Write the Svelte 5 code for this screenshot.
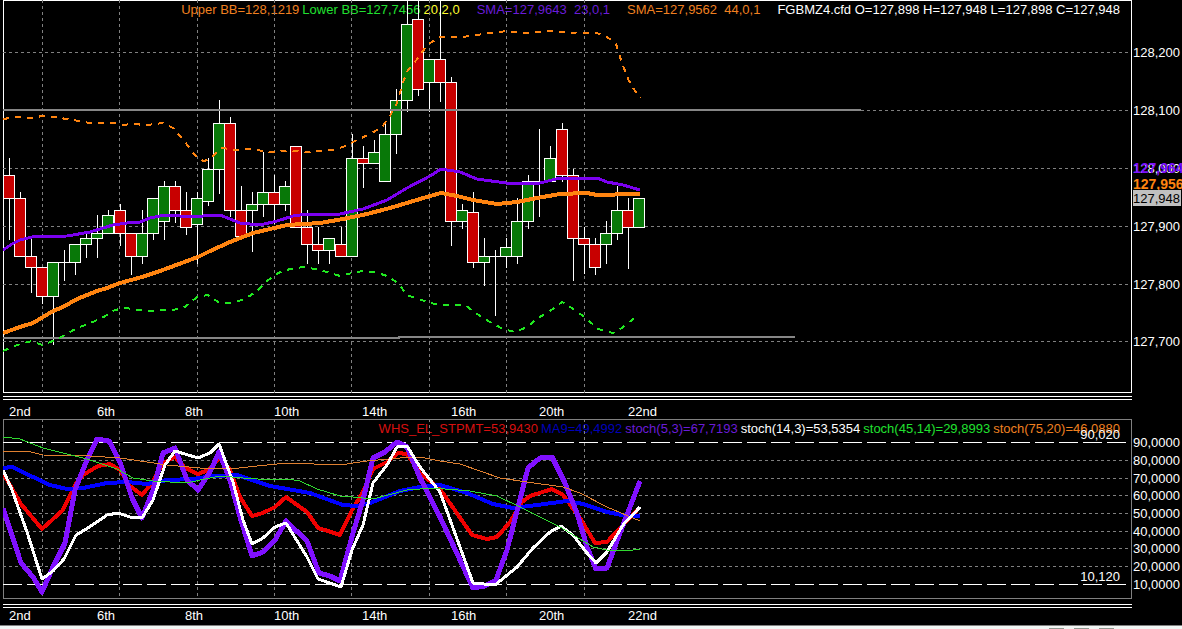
<script>
	const DAY_LINES = [42, 119, 197, 274, 351, 429, 506, 584];

	const dates = [
		{ x: 9, label: '2nd' },
		{ x: 97, label: '6th' },
		{ x: 185, label: '8th' },
		{ x: 274, label: '10th' },
		{ x: 362, label: '14th' },
		{ x: 451, label: '16th' },
		{ x: 539, label: '20th' },
		{ x: 628, label: '22nd' }
	];

	const prices = [
		{ y: 52, label: '128,200' },
		{ y: 110, label: '128,100' },
		{ y: 168, label: '128,000' },
		{ y: 226, label: '127,900' },
		{ y: 284, label: '127,800' },
		{ y: 341, label: '127,700' }
	];

	const levels = [
		{ y: 442, label: '90,0000' },
		{ y: 460, label: '80,0000' },
		{ y: 478, label: '70,0000' },
		{ y: 495, label: '60,0000' },
		{ y: 513, label: '50,0000' },
		{ y: 531, label: '40,0000' },
		{ y: 548, label: '30,0000' },
		{ y: 566, label: '20,0000' },
		{ y: 584, label: '10,0000' }
	];

	// high, body top, body bottom, low, direction
	const bars = [
		[158, 175, 198, 239, 'down'],
		[192, 198, 256, 256, 'down'],
		[239, 256, 267, 292, 'down'],
		[267, 267, 296, 303, 'down'],
		[262, 262, 296, 344, 'up'],
		[250, 262, 262, 280, 'up'],
		[244, 244, 262, 274, 'up'],
		[233, 238, 244, 257, 'up'],
		[215, 233, 238, 257, 'up'],
		[210, 215, 233, 233, 'up'],
		[204, 210, 233, 245, 'down'],
		[233, 233, 256, 274, 'down'],
		[210, 233, 256, 263, 'up'],
		[198, 198, 233, 239, 'up'],
		[181, 186, 221, 239, 'up'],
		[181, 186, 210, 222, 'down'],
		[192, 210, 227, 234, 'down'],
		[192, 198, 224, 263, 'up'],
		[158, 169, 201, 205, 'up'],
		[100, 123, 169, 193, 'up'],
		[117, 123, 210, 216, 'down'],
		[186, 210, 236, 236, 'down'],
		[192, 204, 210, 251, 'up'],
		[152, 192, 204, 216, 'up'],
		[175, 192, 204, 223, 'down'],
		[181, 186, 204, 210, 'up'],
		[146, 146, 227, 227, 'down'],
		[210, 227, 244, 263, 'down'],
		[227, 244, 250, 263, 'down'],
		[238, 238, 250, 263, 'up'],
		[227, 244, 256, 256, 'down'],
		[134, 158, 256, 256, 'up'],
		[146, 158, 163, 187, 'down'],
		[140, 152, 163, 163, 'up'],
		[123, 134, 181, 181, 'up'],
		[89, 100, 134, 153, 'up'],
		[0, 24, 100, 111, 'up'],
		[0, 19, 89, 95, 'down'],
		[59, 59, 82, 111, 'up'],
		[0, 59, 82, 101, 'down'],
		[77, 82, 221, 245, 'down'],
		[204, 210, 221, 228, 'up'],
		[192, 212, 262, 267, 'down'],
		[238, 256, 262, 285, 'up'],
		[250, 256, 256, 315, 'up'],
		[238, 247, 256, 267, 'up'],
		[198, 221, 256, 263, 'up'],
		[175, 181, 221, 228, 'up'],
		[129, 181, 181, 216, 'up'],
		[146, 158, 181, 181, 'up'],
		[123, 129, 175, 181, 'down'],
		[169, 175, 238, 280, 'down'],
		[227, 238, 244, 273, 'down'],
		[238, 244, 267, 274, 'down'],
		[221, 233, 244, 263, 'up'],
		[186, 210, 233, 239, 'up'],
		[198, 210, 227, 268, 'down'],
		[198, 198, 227, 227, 'up']
	];

	const BAR_STEP = 11.05;
	const barX = (i) => Math.round(9 + BAR_STEP * i) + 0.5;

	const upperBB =
		'3,119 17,117 32,118 42,116 53,117 67,119 90,123 115,123 123,125 132,124 147,125 163,123 173,128 185,142 193,153 200,160 205,161 213,156 222,148 237,150 250,149 270,152 290,151 307,152 332,150 343,147 353,142 370,134 382,127 390,116 397,103 403,82 408,70 419,57 427,45 440,37 463,37 490,33 507,31 522,33 553,31 577,33 597,33 607,37 616,44 621,60 628,79 633,88 640,98';
	const lowerBB =
		'3,351 17,345 32,341 42,345 53,341 65,335 77,328 88,324 102,318 115,310 125,308 147,311 173,310 185,307 197,297 208,295 218,302 232,303 245,299 257,291 267,281 278,273 290,269 303,267 315,269 327,272 340,276 352,273 363,271 375,272 387,276 398,283 407,295 430,303 443,305 465,305 477,314 490,322 503,329 515,332 527,327 538,318 550,311 562,302 575,310 587,319 598,329 613,333 622,328 633,319 638,317';
	const smaFast =
		'3,250 12,244 20,240 32,237 67,236 90,232 113,225 127,223 140,222 150,218 160,216 173,215 187,217 220,215 240,223 260,225 277,221 293,216 307,214 340,214 363,209 387,200 407,188 430,176 441,169 460,172 477,179 513,184 540,183 560,178 597,178 607,182 623,185 640,190';
	const smaSlow =
		'3,333 23,326 33,323 53,311 63,307 77,299 97,291 107,288 120,283 142,277 160,271 187,261 198,257 210,251 230,242 253,233 287,225 320,223 343,219 367,214 390,208 410,202 430,196 441,193 457,196 473,200 497,204 517,202 537,198 560,194 587,193 597,195 610,195 620,194 640,194';

	const oscillators = [
		{
			name: 'stpmt',
			points:
				'3,473 21,504 42,529 63,510 75,485 83,475 98,466 110,464 120,470 130,486 142,495 152,483 163,463 175,457 185,468 198,474 208,470 220,458 230,470 240,497 252,516 263,513 275,507 286,497 307,512 318,528 328,531 340,535 352,510 363,492 373,469 387,462 398,453 407,454 420,473 440,489 472,535 487,539 497,537 510,522 522,502 530,496 552,489 563,495 580,518 595,543 607,542 625,523 640,507'
		},
		{
			name: 'ma9',
			points:
				'3,468 12,467 33,477 50,485 67,489 83,488 107,483 127,482 147,484 167,480 193,479 213,476 237,475 270,486 310,493 343,505 357,506 370,503 400,491 420,487 440,485 467,493 493,504 513,508 537,505 567,501 583,504 607,512 627,516 640,516'
		},
		{
			name: 'stoch5',
			points:
				'3,508 21,563 33,577 42,592 53,567 65,543 75,490 87,460 97,439 109,441 120,462 132,498 142,518 153,490 163,453 175,448 187,480 198,490 210,472 219,452 230,480 240,517 252,556 263,552 275,540 286,521 307,541 319,573 330,576 340,581 353,533 363,500 373,458 385,452 397,442 407,447 420,478 440,517 473,588 485,586 496,580 507,550 518,507 528,468 540,458 552,457 565,483 577,513 587,547 596,569 607,568 620,533 640,481'
		},
		{
			name: 'stoch75',
			points:
				'3,451 27,451 43,455 90,456 120,458 147,462 167,465 200,468 230,469 257,466 287,463 340,465 367,461 400,458 420,457 440,461 460,464 500,478 527,482 563,487 580,493 607,507 640,521'
		},
		{
			name: 'stoch14',
			points:
				'3,470 12,490 27,532 42,579 53,571 64,559 76,535 88,528 107,515 118,513 130,517 142,518 153,500 165,465 175,451 198,458 210,453 219,444 233,482 243,520 252,544 263,538 275,527 286,523 307,557 318,579 341,587 352,550 363,525 373,483 387,465 397,447 407,446 420,467 440,492 473,583 495,585 517,567 533,548 550,532 561,526 573,535 587,553 596,563 607,552 623,525 640,507'
		},
		{
			name: 'stoch45',
			points:
				'3,437 20,439 43,448 87,459 117,469 133,478 153,481 187,483 200,480 220,476 243,478 273,480 287,479 300,481 317,489 340,496 353,497 373,499 407,490 433,488 470,491 497,496 520,507 540,517 560,527 580,539 593,547 607,550 627,551 640,549'
		}
	];
</script>

{#snippet dateAxis(baseline)}
	{#each dates as d}
		<text x={d.x - 3} y={baseline}>{d.label}</text>
	{/each}
{/snippet}

<main class="terminal">
	<section class="panel price-panel" aria-label="Price chart">
		<div class="legend price-legend">
			<span class="orange">Upper BB=128,1219</span>
			<span class="green">Lower BB=127,7456</span>
			<span class="yellow">20,2,0</span>
			<span class="purple wide">SMA=127,9643  23,0,1</span>
			<span class="orange wide">SMA=127,9562  44,0,1</span>
			<span class="wide">FGBMZ4.cfd O=127,898 H=127,948 L=127,898 C=127,948</span>
		</div>
		<svg class="plot" width="100%" height="393">
			<g transform="translate(-3 0)">
				{#each prices as p}
					<line class="grid" x1="3" x2="100%" y1={p.y + 0.5} y2={p.y + 0.5} />
				{/each}
				{#each DAY_LINES as x}
					<line class="grid" x1={x + 0.5} x2={x + 0.5} y1="0" y2="393" />
				{/each}

				{#each bars as [high, top, bottom, low, dir], i}
					<line class="wick" x1={barX(i)} x2={barX(i)} y1={high} y2={low + 1} />
					<rect class="body {dir}" x={barX(i) - 6} y={top + 0.5} width="11" height={bottom - top} />
					{#if top === bottom}
						<line class="wick" x1={barX(i) - 6} x2={barX(i) + 6} y1={top + 0.5} y2={top + 0.5} />
					{/if}
				{/each}

				<polyline class="trend" points="3,110 861,110" />
				<polyline class="trend" points="3,338 399,338 399,337 795,337" />
				<polyline class="band upper" points={upperBB} />
				<polyline class="band lower" points={lowerBB} />
				<polyline class="sma fast" points={smaFast} />
				<polyline class="sma slow" points={smaSlow} />
			</g>
		</svg>
	</section>
	<svg class="axis" width="100%" height="393">
		{#each prices as p}
			<text x="1" y={p.y + 5}>{p.label}</text>
		{/each}
		<text class="tag purple" x="1" y="173">127,964</text>
		<text class="tag orange" x="1" y="189">127,956</text>
		<rect class="last-box" x="1" y="190" width="48" height="16" />
		<text class="last" x="1" y="203">127,948</text>
	</svg>

	<div class="rules"></div>
	<svg class="dates" width="100%" height="19">{@render dateAxis(16)}</svg>

	<section class="panel osc-panel" aria-label="Stochastic oscillators">
		<div class="legend osc-legend">
			<span class="red">WHS_EL_STPMT=53,9430</span>
			<span class="blue">MA9=49,4992</span>
			<span class="purple">stoch(5,3)=67,7193</span>
			<span>stoch(14,3)=53,5354</span>
			<span class="green">stoch(45,14)=29,8993</span>
			<span class="orange">stoch(75,20)=46,0880</span>
		</div>
		<svg class="plot" width="100%" height="180">
			<g transform="translate(-3 -419)">
				{#each levels.slice(1, -1) as l}
					<line class="grid" x1="3" x2="100%" y1={l.y + 0.5} y2={l.y + 0.5} />
				{/each}
				{#each DAY_LINES as x}
					<line class="grid" x1={x + 0.5} x2={x + 0.5} y1="419" y2="598" />
				{/each}
				<line class="limit" x1="3" x2="100%" y1="442.5" y2="442.5" />
				<line class="limit" x1="3" x2="100%" y1="584.5" y2="584.5" />
				{#each oscillators as o}
					<polyline class="osc {o.name}" points={o.points} />
				{/each}
				<text x="100%" dx="-9" y="439" text-anchor="end">90,020</text>
				<text x="100%" dx="-9" y="581" text-anchor="end">10,120</text>
			</g>
		</svg>
	</section>
	<svg class="axis" width="100%" height="180">
		{#each levels as l}
			<text x="1" y={l.y - 414}>{l.label}</text>
		{/each}
	</svg>

	<div class="rules lower-rules"></div>
	<svg class="dates" width="100%" height="17">{@render dateAxis(12)}</svg>
</main>

<footer class="window-edge">
	<i></i><i></i><i></i>
</footer>

<style>
	:global(body) {
		margin: 0;
		background: #000;
	}

	.terminal {
		display: grid;
		grid-template-columns: minmax(0, 1fr) 50px;
		padding-left: 3px;
		background: #000;
		color: #fff;
		font-family: 'Liberation Sans', Arial, sans-serif;
		font-size: 13px;
	}

	svg {
		display: block;
	}

	text {
		fill: #fff;
	}

	.panel {
		position: relative;
		grid-column: 1;
		overflow: hidden;
		outline: 1px solid #fff;
		outline-offset: -1px;
	}

	.osc-panel {
		outline-color: #808080;
	}

	.plot {
		position: relative;
		shape-rendering: crispEdges;
	}

	/* sits behind the plot so wicks and grid run over the text */
	.legend {
		position: absolute;
		top: 2px;
		right: 12px;
		display: flex;
		gap: 3px;
		line-height: 16px;
		white-space: pre;
	}

	.price-legend .wide {
		margin-left: 14px;
	}

	.axis {
		grid-column: 2;
		overflow: hidden;
	}

	.axis .tag {
		font-size: 14px;
		font-weight: bold;
	}

	.axis .last-box {
		fill: #c0c0c0;
	}

	.axis .last {
		fill: #000;
	}

	.orange { color: #f08020; fill: #ff8410; }
	.green { color: #20e030; }
	.yellow { color: #ffff30; }
	.purple { color: #6a1cd8; fill: #7b10ff; }
	.red { color: #d81010; }
	.blue { color: #0000b8; }

	.rules {
		grid-column: 1;
		height: 2px;
		margin-top: 3px;
		border-top: 1px solid #fff;
		border-bottom: 1px solid #fff;
	}

	.lower-rules {
		margin-top: 5px;
	}

	.dates {
		grid-column: 1;
	}

	.grid {
		stroke: #808080;
		stroke-dasharray: 3 3;
	}

	.limit {
		stroke: #fff;
		stroke-dasharray: 19 5;
	}

	.wick {
		stroke: #fff;
	}

	.body {
		stroke: #fff;
	}

	.up { fill: #087808; }
	.down { fill: #c80000; }

	polyline {
		fill: none;
		stroke-linejoin: round;
	}

	.trend {
		stroke: #868686;
		stroke-width: 2;
	}

	.band {
		stroke-width: 2;
		stroke-dasharray: 6 6;
	}

	.upper { stroke: #ff8410; }
	.lower { stroke: #20e820; }

	.sma.fast {
		stroke: #7b00f0;
		stroke-width: 3;
	}

	.sma.slow {
		stroke: #ff8410;
		stroke-width: 4;
	}

	.stpmt { stroke: #f00000; stroke-width: 4; }
	.ma9 { stroke: #0000ff; stroke-width: 4; }
	.stoch5 { stroke: #8010ff; stroke-width: 5; }
	.stoch75 { stroke: #e08030; }
	.stoch14 { stroke: #fff; stroke-width: 3; }
	.stoch45 { stroke: #30d830; }

	.window-edge {
		display: flex;
		justify-content: flex-end;
		align-items: flex-end;
		gap: 10px;
		height: 3px;
		padding-right: 68px;
		border-top: 1px solid #808080;
		background: #f2f6f4;
	}

	.window-edge i {
		width: 15px;
		height: 1px;
		background: #909890;
	}
</style>
